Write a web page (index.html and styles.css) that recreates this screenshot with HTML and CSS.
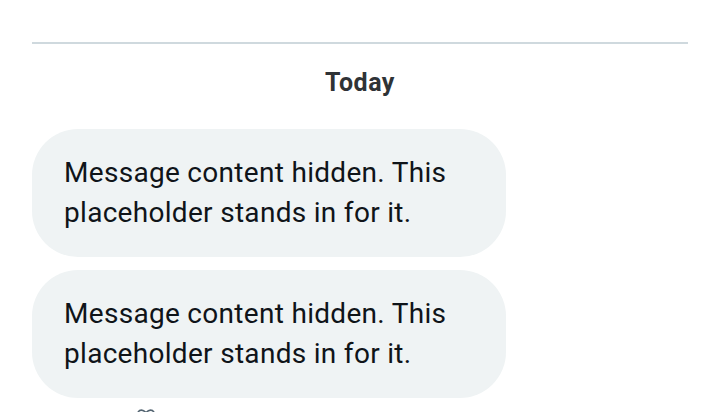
FILE: index.html
```html
<!DOCTYPE html>
<html>
<head>
    <title>Messages</title>
    <link rel="stylesheet" href="styles.css">
</head>
<body>
    <div class="thread">
        <div class="divider"></div>
        <div class="day">Today</div>
        <div class="messages">
            <div class="bubble">Message content hidden. This placeholder stands in for it.</div>
            <div class="bubble">Message content hidden. This placeholder stands in for it.</div>
        </div>
        <div class="reactions">
            <svg width="20" height="20" viewBox="0 0 24 24"><path d="M12 21s-7.5-4.6-9.5-9.2C1 8.3 3.2 5 6.6 5c2.1 0 3.6 1.2 5.4 3 1.8-1.8 3.3-3 5.4-3 3.4 0 5.6 3.3 4.1 6.8C19.5 16.4 12 21 12 21z" fill="none" stroke="#536471" stroke-width="2"/></svg>
        </div>
    </div>
</body>
</html>
```

FILE: styles.css
```css
body {
    margin: 0;
    padding: 0;
    background-color: #ffffff;
    font-family: Roboto, "Noto Sans", Arial, sans-serif;
    color: #0f1419;
    overflow: hidden;
}

.thread {
    padding: 42px 32px 0 32px;
    display: flex;
    flex-direction: column;
}

.divider {
    height: 2px;
    background-color: #cfd9de;
}

.day {
    text-align: center;
    font-size: 25px;
    font-weight: 700;
    letter-spacing: 0.5px;
    color: #2f3336;
    margin-top: 22px;
    line-height: 34px;
}

.messages {
    display: flex;
    flex-direction: column;
    gap: 13px;
    margin-top: 29px;
}

.bubble {
    width: 474px;
    box-sizing: border-box;
    background-color: #eff3f4;
    border-radius: 46px;
    padding: 24px 32px;
    font-size: 28px;
    line-height: 40px;
    letter-spacing: 0.3px;
}

.reactions {
    padding: 8px 0 0 104px;
}
```
